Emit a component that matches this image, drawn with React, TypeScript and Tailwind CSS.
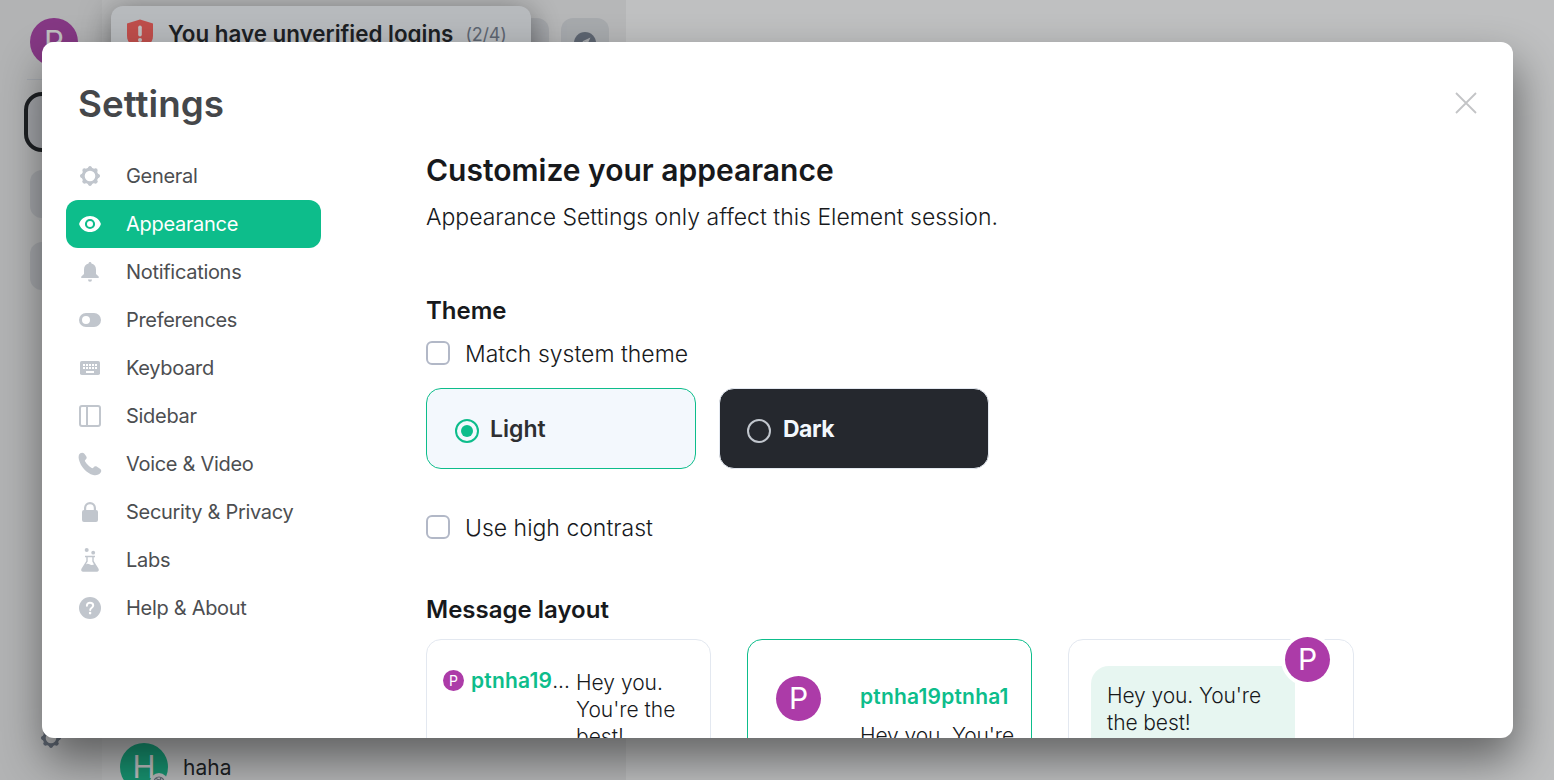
import React from "react";

type IconProps = { className?: string };

const Svg = ({ children, className = "" }: { children: React.ReactNode; className?: string }) => (
  <svg viewBox="0 0 24 24" width="24" height="24" fill="currentColor" className={"shrink-0 " + className}>
    {children}
  </svg>
);

const Gear = ({ className }: IconProps) => (
  <Svg className={className}>
    <circle cx="12" cy="12" r="6.8" fill="none" stroke="currentColor" strokeWidth="3" />
    {[0, 45, 90, 135, 180, 225, 270, 315].map((a) => (
      <path key={a} d="M9.3 5 10.300 2.900Q12 1 13.700 2.900L14.700 5z" transform={`rotate(${a} 12 12)`} />
    ))}
  </Svg>
);

const Eye = () => (
  <Svg>
    <path
      fillRule="evenodd"
      d="M12 4C7.2 4 3 6.9 1.3 11.3a2 2 0 0 0 0 1.4C3 17.1 7.2 20 12 20s9-2.9 10.7-7.3a2 2 0 0 0 0-1.4C21 6.900 16.800 4 12 4zm0 13.100a5.100 5.100 0 1 1 0-10.200 5.100 5.100 0 0 1 0 10.200z"
    />
    <circle cx="12" cy="12" r="3" />
  </Svg>
);

const Bell = () => (
  <Svg>
    <path d="M12 2c.8 0 1.400.6 1.400 1.300v.3c2.800.6 4.600 2.900 4.600 5.900v4.500l2.600 2.600c.7.700.3 1.400-.5 1.400H3.900c-.8 0-1.200-.7-.5-1.400L6 14V9.500c0-3 1.800-5.300 4.600-5.900v-.3C10.600 2.600 11.200 2 12 2z" />
    <path d="M10 19.600h4a2 2.200 0 0 1-4 0z" />
  </Svg>
);

const Toggle = () => (
  <Svg>
    <path
      fillRule="evenodd"
      d="M8 5h8a7 7 0 0 1 0 14H8A7 7 0 0 1 8 5zm0 3a4 4 0 1 0 0 8 4 4 0 0 0 0-8z"
    />
  </Svg>
);

const Keyboard = () => (
  <Svg>
    <rect x="2" y="5" width="20" height="14" rx="1.800" />
    <g fill="#fff">
      {[5, 8, 11, 14, 17].map((x) => (
        <React.Fragment key={x}>
          <rect x={x} y="8" width="2" height="2" />
          <rect x={x} y="11" width="2" height="2" />
        </React.Fragment>
      ))}
      <rect x="8" y="15" width="8" height="2" />
    </g>
  </Svg>
);

const Sidebar = () => (
  <Svg>
    <rect x="2" y="2" width="20" height="20" rx="2" fill="none" stroke="currentColor" strokeWidth="2" />
    <rect x="8" y="2" width="2" height="20" />
  </Svg>
);

const Phone = () => (
  <Svg>
    <path d="M2.300 1.300C3.600.400 5.400.600 6.400 1.800l1.800 2.500c.8 1.200.6 2.400-.5 3.200-.9.700-1 1.300-.4 2.200 1.500 2.400 3.600 4.500 6 6.100.9.600 1.600.5 2.200-.4.9-1.200 2.200-1.500 3.500-.7l3 2c1.300.9 1.700 2.500.7 3.900-1.500 2.200-4.500 3.100-7.500 2.400C8.600 21.300 2.500 14.500.9 7.500.300 4.800.600 2.500 2.300 1.300z" />
  </Svg>
);

const Lock = () => (
  <Svg>
    <path
      fillRule="evenodd"
      d="M6 10V8a6 6 0 0 1 12 0v2a2 2 0 0 1 2 2v8a2 2 0 0 1-2 2H6a2 2 0 0 1-2-2v-8a2 2 0 0 1 2-2zm2.200 0h7.600V8a3.800 3.800 0 0 0-7.600 0z"
    />
  </Svg>
);

const Flask = () => (
  <Svg>
    <circle cx="8.700" cy="2" r="2" />
    <circle cx="15.200" cy="4.700" r="1.900" />
    <path
      fillRule="evenodd"
      d="M7 7.800h10v1.400h-1.300v3.900l4.700 7.300c1 1.600.2 3.400-1.600 3.400H5.200c-1.800 0-2.600-1.800-1.600-3.400l4.700-7.300V9.200H7zM9.700 9.200v4.300l-1.900 2.900c1.400-.9 2.700-.6 4.200.1 1.500.7 2.700.7 4 .1l-1.700-3.100V9.200z"
    />
  </Svg>
);

const Help = () => (
  <Svg>
    <circle cx="12" cy="12" r="11" />
    <path d="M8.900 9.700c0-1.900 1.300-3 3.100-3s3.200 1.100 3.200 2.700c0 2.300-3 2.300-3 4.600" fill="none" stroke="#fff" strokeWidth="2" strokeLinecap="round" />
    <circle cx="12.100" cy="17.100" r="1.300" fill="#fff" />
  </Svg>
);

const Compass = ({ className }: IconProps) => (
  <Svg className={className}>
    <circle cx="12" cy="12" r="11" />
    <path d="M17.500 6.500 14 14l-7.500 3.500L10 10z" fill="#dddfe3" />
    <circle cx="12" cy="12" r="1.300" />
  </Svg>
);

const NAV = [
  { label: "General", icon: <Gear /> },
  { label: "Appearance", icon: <Eye />, active: true },
  { label: "Notifications", icon: <Bell /> },
  { label: "Preferences", icon: <Toggle /> },
  { label: "Keyboard", icon: <Keyboard /> },
  { label: "Sidebar", icon: <Sidebar /> },
  { label: "Voice & Video", icon: <Phone /> },
  { label: "Security & Privacy", icon: <Lock /> },
  { label: "Labs", icon: <Flask /> },
  { label: "Help & About", icon: <Help /> },
];

const Avatar = ({ className }: { className: string }) => (
  <span className={"flex shrink-0 items-center justify-center rounded-full bg-[#ac3ba8] font-normal text-white " + className}>
    P
  </span>
);

const Checkbox = ({ label }: { label: string }) => (
  <label className="flex h-8 items-center gap-[15px]">
    <span className="h-6 w-6 rounded-[6px] border-2 border-[#b2b8c7]" />
    <span className="mt-[2px] text-[23px]">{label}</span>
  </label>
);

function AppBackground() {
  return (
    <div className="flex h-full bg-white">
      <aside className="flex w-[102px] flex-col bg-[#ececec] pt-[18px]">
        <Avatar className="ml-[30px] h-12 w-12 text-[31px]" />
        <div className="mt-[13px] ml-[27px] h-px w-12 bg-[#d9dde4]" />
        <div className="mt-3 ml-6 h-[60px] w-[60px] rounded-[18px] border-4 border-[#17191c] bg-[#d5d7db]" />
        <div className="mt-[18px] ml-[30px] h-12 w-12 rounded-xl bg-[#d5d7db]" />
        <div className="mt-6 ml-[30px] h-12 w-12 rounded-xl bg-[#d5d7db]" />
        <Gear className="mt-[436px] ml-[39px] text-[#737d8c]" />
      </aside>
      <section className="flex w-[524px] flex-col justify-between bg-[#f3f3f3] pt-[18px]">
        <div className="flex gap-3 pl-6">
          <div className="flex h-12 w-[423px] items-center justify-end rounded-xl bg-[#dddfe3] pr-3">
            <span className="mt-5 h-6 w-6 rounded-full bg-[#c6c9cf]" />
          </div>
          <div className="flex h-12 w-12 items-center justify-center rounded-xl bg-[#dddfe3]">
            <Compass className="mt-[1px] text-[#737d8c]" />
          </div>
        </div>
        <div className="flex h-[37px] gap-[15px] pl-[18px]">
          <span className="relative flex h-12 w-12 items-center justify-center rounded-full bg-[#0dbd8b] text-[31px] font-normal text-white">
            H
            <span className="absolute top-[30px] left-[30px] flex h-[18px] w-[18px] items-center justify-center rounded-full bg-[#f1f2f3]">
              <svg viewBox="0 0 12 12" width="12" height="12" fill="none" stroke="#737d8c" strokeWidth="1.2">
                <circle cx="6" cy="6" r="5" />
                <path d="M3 2.500 6 4 5 6M8 1.500 7 4l3.500 1" />
              </svg>
            </span>
          </span>
          <span className="pt-[10px] text-[21px] leading-[30px] font-normal text-[#17191c]">haha</span>
        </div>
      </section>
    </div>
  );
}

function Toast() {
  return (
    <div className="absolute top-[6px] left-[111px] flex h-[120px] w-[420px] items-start rounded-xl bg-[#f4f6fa] pt-[12px] pl-[15px] shadow-[0_6px_30px_rgba(0,0,0,0.5)]">
      <svg viewBox="0 0 28 32" width="28" height="32" className="mt-[1px]">
        <path d="M14 .5 27 4.500v12.500c0 7-6 11-13 14C7 28 1 24 1 17V4.500z" fill="#ff5b55" />
        <rect x="12.200" y="6.500" width="3.600" height="11" rx="1.800" fill="#fff" />
        <circle cx="14" cy="21" r="2" fill="#fff" />
      </svg>
      <span className="ml-[14px] text-[22.4px] leading-[32px] font-semibold whitespace-nowrap text-[#17191c]">
        You have unverified logins
      </span>
      <span className="ml-3 text-[18px] leading-[33px] font-normal tracking-[-0.200px] text-[#737d8c]">(2/4)</span>
    </div>
  );
}

export default function App() {
  return (
    <div className="relative h-[780px] w-[1554px] overflow-hidden font-['Inter','Noto_Sans',sans-serif] font-[350] text-[#17191c]">
      <AppBackground />
      <Toast />
      <div className="absolute inset-0 bg-[#2e3033] opacity-[0.304]" />
      <div className="absolute inset-0 pt-[42px] pl-[42px]">
        <main className="flex h-[696px] w-[1471px] overflow-hidden rounded-xl bg-white shadow-[3px_22px_45px_0_rgba(0,0,0,0.48)]">
          <div className="w-[384px] shrink-0 pl-6">
            <h1 className="mt-[38px] ml-3 h-12 text-[36.800px] leading-[48px] font-semibold text-[#45474a]">Settings</h1>
            <nav className="mt-6 w-[255px]">
              {NAV.map((n) => (
                <div
                  key={n.label}
                  className={
                    "flex h-12 items-center gap-6 rounded-[12px] pl-3 text-[20px] font-normal tracking-[-0.300px] " +
                    (n.active ? "bg-[#0dbd8b] text-white" : "text-[#c1c6cd]")
                  }
                >
                  {n.icon}
                  <span className={n.active ? "text-white" : "text-[#4c4e51]"}>{n.label}</span>
                </div>
              ))}
            </nav>
          </div>

          <div className="w-[983px] shrink-0">
            <h2 className="mt-[108px] text-[30px] leading-[40px] font-semibold">Customize your appearance</h2>
            <p className="mt-[11px] text-[23px] leading-[32px]">Appearance Settings only affect this Element session.</p>

            <h3 className="mt-[62px] text-[24px] leading-[32px] font-semibold">Theme</h3>
            <div className="mt-[10px]">
              <Checkbox label="Match system theme" />
            </div>
            <div className="mt-[19px] flex gap-[23px]">
              <div className="flex h-[81px] w-[270px] items-center rounded-[15px] border border-[#0dbd8b] bg-[#f3f8fd] pl-7">
                <span className="mt-1 flex h-6 w-6 items-center justify-center rounded-full border-2 border-[#0dbd8b]">
                  <span className="h-3 w-3 rounded-full bg-[#0dbd8b]" />
                </span>
                <span className="mt-[1px] ml-[11px] text-[23px] font-semibold text-[#2e2f32]">Light</span>
              </div>
              <div className="flex h-[81px] w-[270px] items-center rounded-[15px] border border-[#e3e8f0] bg-[#25282e] pl-[27px]">
                <span className="mt-1 h-6 w-6 rounded-full border-2 border-[#c1c6cd]" />
                <span className="mt-[1px] ml-3 text-[23px] font-bold tracking-[-0.5px] text-[#f3f8fd]">Dark</span>
              </div>
            </div>
            <div className="mt-[42px]">
              <Checkbox label="Use high contrast" />
            </div>

            <h3 className="mt-[51px] text-[24px] leading-[32px] font-semibold">Message layout</h3>
            <div className="mt-[13px] flex gap-9 text-[21px] leading-[27px]">
              <div className="flex h-[300px] w-[285px] items-start rounded-[15px] border border-[#e3e8f0] pt-[29px] pl-4">
                <Avatar className="mt-[1px] h-[21px] w-[21px] text-[14px]" />
                <span className="ml-[7px] w-[99px] leading-[24px] whitespace-nowrap">
                  <span className="font-semibold tracking-[0.200px] text-[#0dbd8b]">ptnha19</span>...
                </span>
                <span className="ml-[6px] w-[110px]">Hey you. You're the best!</span>
              </div>
              <div className="flex h-[300px] w-[285px] items-start rounded-[15px] border border-[#0dbd8b] pt-9 pl-7">
                <Avatar className="h-[45px] w-[45px] text-[30px]" />
                <div className="ml-[39px] pt-[7px]">
                  <div className="font-semibold tracking-[0.200px] text-[#0dbd8b]">ptnha19ptnha1</div>
                  <div className="mt-3 tracking-[-0.100px] whitespace-nowrap">Hey you. You're</div>
                </div>
              </div>
              <div className="relative h-[300px] w-[286px] rounded-[15px] border border-[#e3e8f0] pt-[26px] pl-[22px]">
                <div className="h-[120px] w-[204px] rounded-[18px] rounded-tr-none bg-[#e7f6f1] pt-4 pl-4 tracking-[-0.100px]">
                  Hey you. You're
                  <br />
                  the best!
                </div>
                <div className="absolute top-[-7px] left-[212px] rounded-full border-4 border-white">
                  <Avatar className="h-[45px] w-[45px] text-[30px]" />
                </div>
              </div>
            </div>
          </div>

          <svg viewBox="0 0 22 22" width="22" height="22" className="mt-[50px] ml-[46px] shrink-0" stroke="#c3c4c6" strokeWidth="1.800">
            <path d="M1 1 21 21M21 1 1 21" />
          </svg>
        </main>
      </div>
    </div>
  );
}
